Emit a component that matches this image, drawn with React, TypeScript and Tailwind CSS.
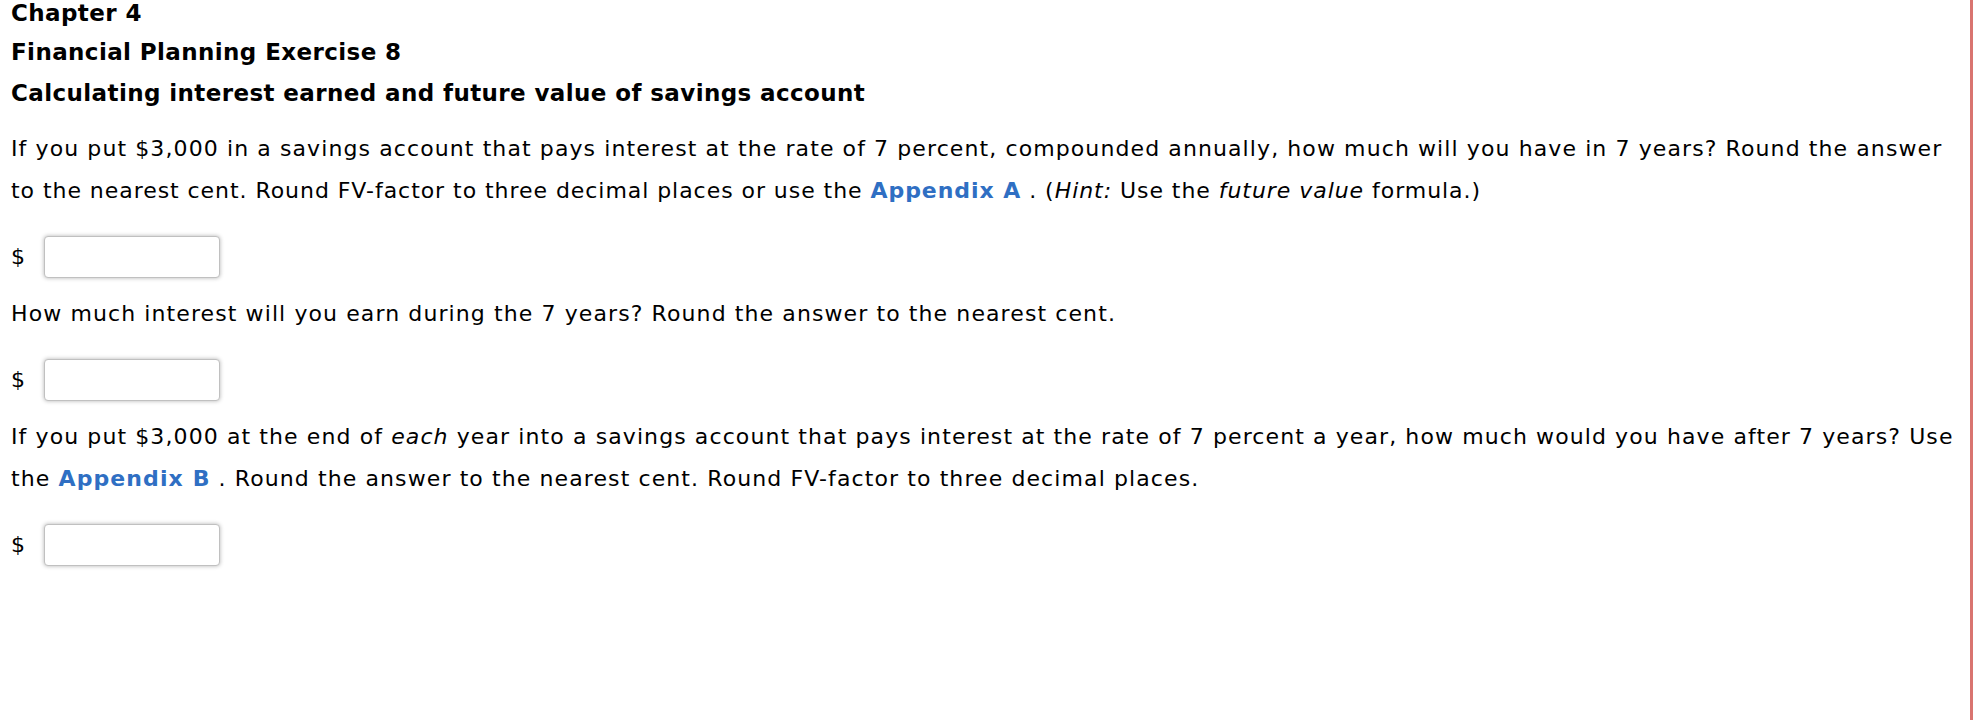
import React from 'react';

const Link: React.FC<{ children: React.ReactNode }> = ({ children }) => (
  <a href="#" className="font-bold text-[#2f6fc3] no-underline">{children}</a>
);

const AnswerBox: React.FC<{ className?: string }> = ({ className = '' }) => (
  <div className={`flex items-center ${className}`}>
    <span className="w-[33px] text-[22px] leading-[42px]">$</span>
    <input
      type="text"
      className="w-[176px] h-[42px] rounded-[4px] border border-[#c0c0c0] bg-white shadow-[0_0_4px_rgba(0,0,0,0.3)] outline-none px-2"
    />
  </div>
);

export default function App() {
  return (
    <div className="w-full h-screen bg-white flex">
      <div
        className="flex-1 h-full mr-[3px] border-r-[3px] border-[#d97470] pl-[11px] pt-[2px] text-black"
        style={{ fontFamily: '"DejaVu Sans", Verdana, sans-serif' }}
      >
        {/* Headings */}
        <h1 className="text-[23px] leading-[22px] tracking-[0.4px] font-bold">Chapter 4</h1>
        <h2 className="mt-[17px] text-[23px] leading-[22px] tracking-[0.4px] font-bold">Financial Planning Exercise 8</h2>
        <h3 className="mt-[19px] text-[23px] leading-[22px] tracking-[0.4px] font-bold">
          Calculating interest earned and future value of savings account
        </h3>

        {/* Part 1 */}
        <div className="mt-[24px] text-[22px] leading-[42px] tracking-[1.1px] whitespace-nowrap">
          <p>
            If you put $3,000 in a savings account that pays interest at the rate of 7 percent, compounded annually, how much will you have in 7 years? Round the answer
          </p>
          <p className="tracking-[0.95px]">
            to the nearest cent. Round FV-factor to three decimal places or use the <Link>Appendix A</Link> . (<i>Hint:</i> Use the <i>future value</i> formula.)
          </p>
        </div>
        <AnswerBox className="mt-[24px]" />

        {/* Part 2 */}
        <p className="mt-[15px] text-[22px] leading-[42px] tracking-[1.1px] whitespace-nowrap">
          How much interest will you earn during the 7 years? Round the answer to the nearest cent.
        </p>
        <AnswerBox className="mt-[24px]" />

        {/* Part 3 */}
        <div className="mt-[15px] text-[22px] leading-[42px] tracking-[1.1px] whitespace-nowrap">
          <p>
            If you put $3,000 at the end of <i>each</i> year into a savings account that pays interest at the rate of 7 percent a year, how much would you have after 7 years? Use
          </p>
          <p>
            the <Link>Appendix B</Link> . Round the answer to the nearest cent. Round FV-factor to three decimal places.
          </p>
        </div>
        <AnswerBox className="mt-[24px]" />
      </div>
    </div>
  );
}
